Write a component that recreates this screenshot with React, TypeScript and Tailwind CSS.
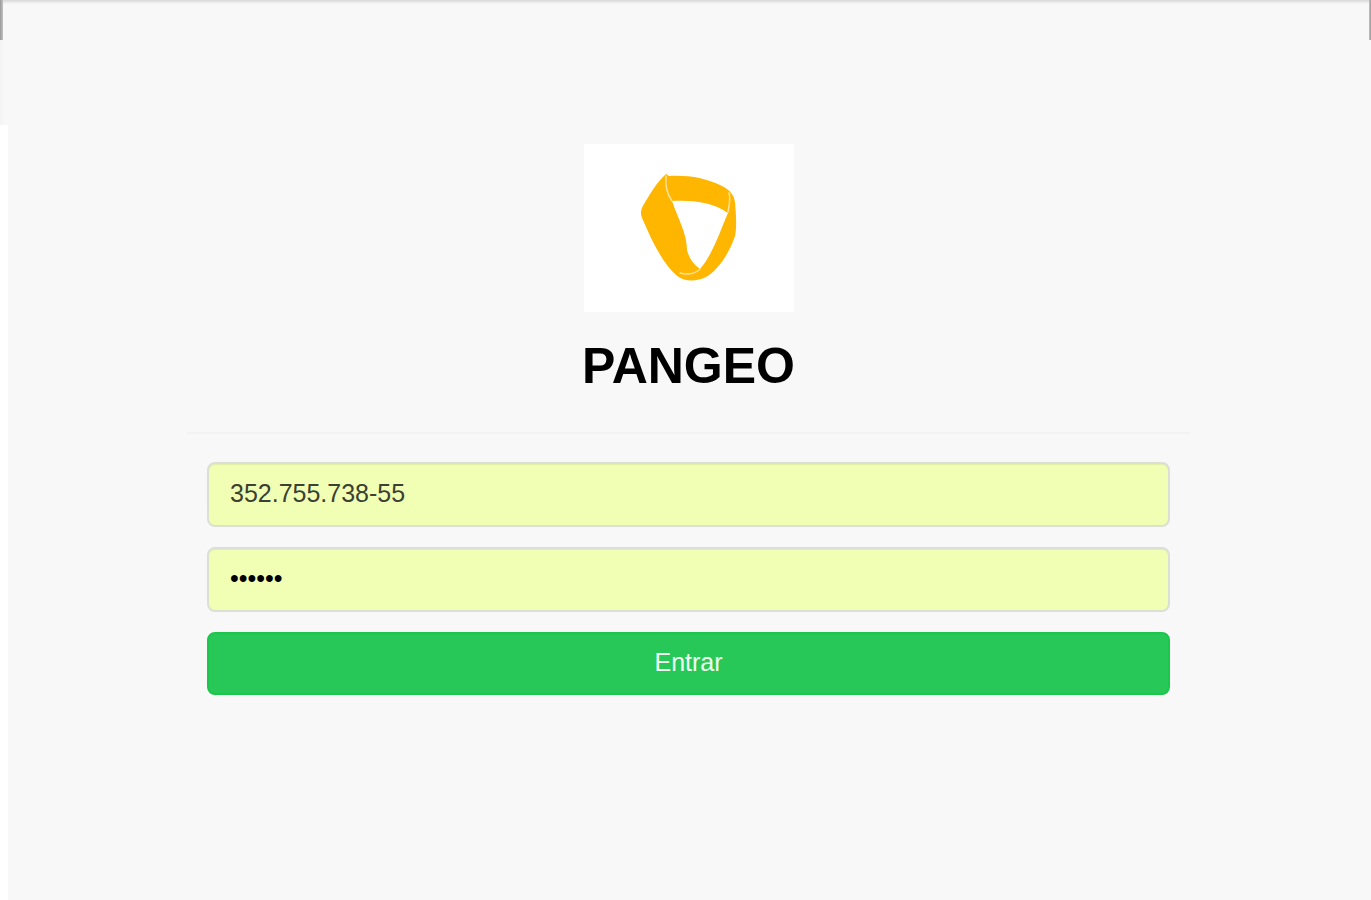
import { useState } from "react";

function Logo() {
  return (
    <svg
      viewBox="0 0 210 168"
      className="h-[168px] w-[210px] bg-white"
      role="img"
      aria-label="Pangeo"
    >
      <path
        fill="#ffb600"
        fillRule="evenodd"
        d="M82 30L85 32C105 31 122 34 138 42C146 46 150 51 151 58C152 70 153 82 151 92C145 110 134 126 122 133C112 138 100 138 92 131C82 122 74 108 67 94L58 74C56 69 57 65 60 60C66 50 73 38 82 30ZM88 57C94 75 103 89 103 106C105 114 109 120 116 125C129 110 136 87 144 69C128 58 109 56 88 57Z"
      />
      <g fill="none" stroke="#ffdf94" strokeWidth="1.6" strokeLinecap="round">
        <path d="M82 32C81 42 83 50 88 57" />
        <path d="M144 68C145 61 147 55 145 49" />
        <path d="M96 129C103 131 111 130 116 125" />
      </g>
    </svg>
  );
}

const fieldClass =
  "h-[65px] w-full rounded-lg border-2 border-[#dcdfd4] bg-[#f0ffb4] px-[21px] pb-0.5 text-[25px] shadow-[inset_0_1px_1px_rgba(0,0,0,0.07)] outline-none";

export default function App() {
  const [user, setUser] = useState("352.755.738-55");
  const [password, setPassword] = useState("123456");

  return (
    <div className="flex min-h-screen bg-[#f8f8f8] bg-linear-to-b from-[#d8d8d8] to-[#f8f8f8] to-[4px] font-['Liberation_Sans',Arial,sans-serif]">
      <div className="flex w-2 shrink-0 flex-col">
        <div className="h-10 w-[3px] bg-linear-to-r from-[#999999] to-[#c4c4c4]" />
        <div className="h-[85px] w-[3px] bg-[#f4f4f4]" />
        <div className="w-full flex-1 bg-white" />
      </div>

      <main className="flex flex-1 flex-col items-center px-5 pt-36">
        <Logo />
        <h1 className="mt-6 text-[50px] leading-[60px] font-bold text-black">PANGEO</h1>
        <form
          className="mt-9 flex w-full max-w-[1003px] flex-col gap-5 border-t-2 border-[#f3f3f3] px-5 pt-7"
          onSubmit={(event) => event.preventDefault()}
        >
          <input
            type="text"
            aria-label="CPF"
            autoComplete="off"
            className={`${fieldClass} text-[#3c4032]`}
            value={user}
            onChange={(event) => setUser(event.target.value)}
          />
          <input
            type="password"
            aria-label="Senha"
            autoComplete="off"
            className={`${fieldClass} text-black`}
            value={password}
            onChange={(event) => setPassword(event.target.value)}
          />
          <button
            type="submit"
            className="h-[63px] w-full rounded-lg border-2 border-[#1cc54c] bg-[#28c858] pb-0.5 text-[25px] text-[#effff0]"
          >
            Entrar
          </button>
        </form>
      </main>

      <div className="w-0.5 shrink-0">
        <div className="h-10 bg-linear-to-r from-[#c4c4c4] to-[#999999]" />
      </div>
    </div>
  );
}
